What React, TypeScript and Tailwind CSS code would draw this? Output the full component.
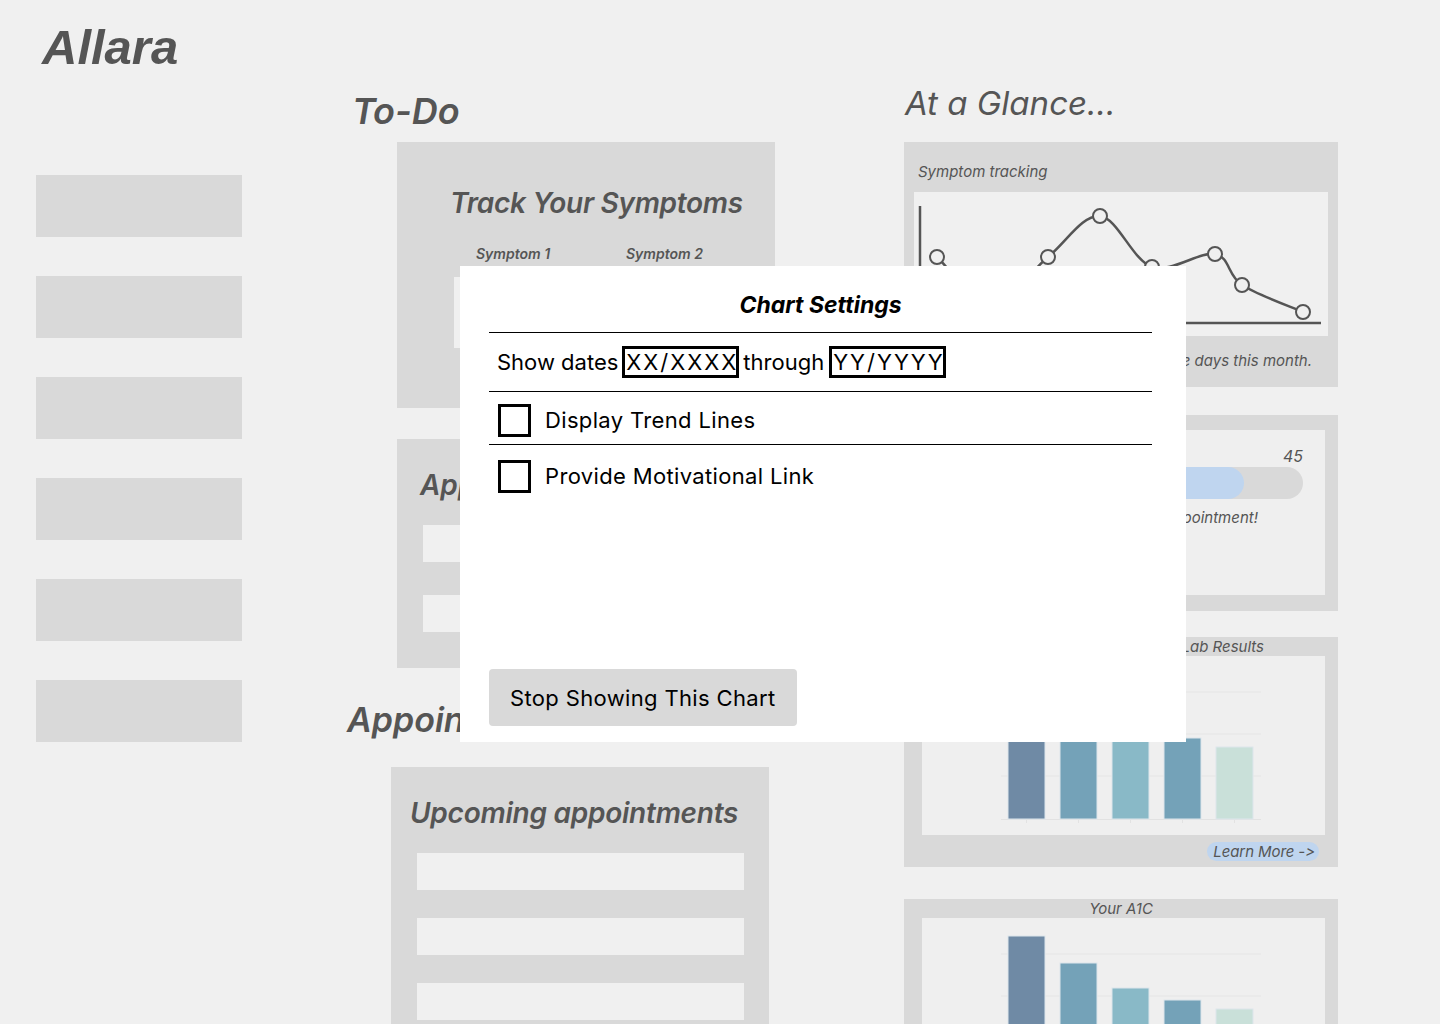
import React from "react";

const pts: [number, number][] = [
  [23, 65],
  [78, 112],
  [134, 65],
  [186, 24],
  [238, 75],
  [301, 62],
  [328, 93],
  [389, 120],
];

function smoothPath(p: [number, number][]) {
  let d = `M${p[0][0]},${p[0][1]}`;
  for (let i = 0; i < p.length - 1; i++) {
    const p0 = p[i - 1] || p[i];
    const p1 = p[i];
    const p2 = p[i + 1];
    const p3 = p[i + 2] || p[i + 1];
    const c1x = p1[0] + (p2[0] - p0[0]) / 6;
    const c1y = p1[1] + (p2[1] - p0[1]) / 6;
    const c2x = p2[0] - (p3[0] - p1[0]) / 6;
    const c2y = p2[1] - (p3[1] - p1[1]) / 6;
    d += ` C${c1x},${c1y} ${c2x},${c2y} ${p2[0]},${p2[1]}`;
  }
  return d;
}

function LineChart() {
  return (
    <svg width="414" height="144" viewBox="0 0 414 144">
      <line x1="6" y1="14" x2="6" y2="131" stroke="#555" strokeWidth="2.5" />
      <line x1="6" y1="131" x2="407" y2="131" stroke="#555" strokeWidth="2.5" />
      <path d={smoothPath(pts)} fill="none" stroke="#555" strokeWidth="2.5" />
      {pts.map(([x, y], i) => (
        <circle key={i} cx={x} cy={y} r="7" fill="#f0f0f0" stroke="#555" strokeWidth="2" />
      ))}
    </svg>
  );
}

const bars = [
  { x: 86, top: 18, c: "#6f8aa5" },
  { x: 138, top: 45, c: "#74a2b8" },
  { x: 190, top: 70, c: "#89b9c7" },
  { x: 242, top: 82, c: "#74a2b8" },
  { x: 294, top: 91, c: "#c9e0d9" },
];

function BarChart() {
  return (
    <svg width="403" height="179" viewBox="0 0 403 179">
      {[36, 78, 120].map((y) => (
        <line key={y} x1="79" y1={y} x2="339" y2={y} stroke="#e5e5e5" strokeWidth="1" />
      ))}
      <line x1="79" y1="163.5" x2="339" y2="163.5" stroke="#e2e2e2" strokeWidth="1" />
      {bars.map((b, i) => (
        <g key={i}>
          <rect x={b.x} y={b.top} width="37" height={163 - b.top} fill={b.c} stroke="#dde6ec" strokeWidth="1" />
          <line x1={b.x + 18.5} y1="164" x2={b.x + 18.5} y2="167" stroke="#e2e2e2" strokeWidth="1" />
        </g>
      ))}
    </svg>
  );
}

function Checkbox() {
  return <div className="w-[33px] h-[33px] border-[3px] border-black shrink-0" />;
}

export default function App() {
  return (
    <div className="relative w-[1440px] h-[1024px] overflow-hidden bg-[#f0f0f0] font-['Inter',sans-serif] text-[#555] [font-feature-settings:'calt'_0]">
      <div className="flex">
        {/* Column 1 */}
        <div className="w-[347px] shrink-0 pl-[36px]">
          <div className="pl-[6px] pt-[23px] text-[49px] leading-none font-bold italic font-['Liberation_Sans',Arial,sans-serif] text-[#555]">
            Allara
          </div>
          <div className="mt-[103px] flex flex-col gap-[39px]">
            {[0, 1, 2, 3, 4, 5].map((i) => (
              <div key={i} className="w-[206px] h-[62px] bg-[#d9d9d9]" />
            ))}
          </div>
        </div>

        {/* Column 2 */}
        <div className="w-[557px] shrink-0">
          <div className="mt-[93px] ml-[5px] text-[36px] leading-none font-semibold italic">To-Do</div>
          <div className="mt-[13px] ml-[50px] w-[378px] h-[266px] bg-[#d9d9d9] pt-[47px]">
            <div className="pl-[53px] text-[28px] leading-none font-semibold italic tracking-[-0.3px]">Track Your Symptoms</div>
            <div className="mt-[30px] pl-[79px] flex text-[14px] leading-none font-semibold italic">
              <div className="w-[150px]">Symptom 1</div>
              <div>Symptom 2</div>
            </div>
            <div className="mt-[16px] ml-[57px] w-[290px] h-[71px] bg-[#f0f0f0]" />
          </div>
          <div className="mt-[31px] ml-[50px] w-[378px] h-[229px] bg-[#d9d9d9] pt-[32px]">
            <div className="pl-[23px] text-[28px] leading-none font-semibold italic">Appointment Notes</div>
            <div className="mt-[26px] pl-[26px] flex flex-col gap-[33px]">
              <div className="w-[327px] h-[37px] bg-[#f0f0f0]" />
              <div className="w-[327px] h-[37px] bg-[#f0f0f0]" />
            </div>
          </div>
          <div className="mt-[35px] text-[34px] leading-none font-semibold italic">Appointments</div>
          <div className="mt-[30px] ml-[44px] w-[378px] h-[300px] bg-[#d9d9d9] pt-[32px]">
            <div className="pl-[19px] text-[28px] leading-none font-semibold italic tracking-[-0.25px]">Upcoming appointments</div>
            <div className="mt-[26px] pl-[26px] flex flex-col gap-[28px]">
              <div className="w-[327px] h-[37px] bg-[#f0f0f0]" />
              <div className="w-[327px] h-[37px] bg-[#f0f0f0]" />
              <div className="w-[327px] h-[37px] bg-[#f0f0f0]" />
            </div>
          </div>
        </div>

        {/* Column 3 */}
        <div className="w-[434px] shrink-0">
          <div className="mt-[87px] ml-[1px] text-[33px] leading-none italic">At a Glance...</div>

          <div className="mt-[22px] w-[434px] h-[245px] bg-[#d9d9d9] pt-[22px]">
            <div className="pl-[14px] text-[15px] leading-none italic">Symptom tracking</div>
            <div className="mt-[13px] ml-[10px] w-[414px] h-[144px] bg-[#f0f0f0]">
              <LineChart />
            </div>
            <div className="mt-[17px] pr-[26px] text-right text-[15px] leading-none italic whitespace-nowrap">
              You had symptoms on some of the days this month.
            </div>
          </div>

          <div className="mt-[28px] w-[434px] h-[196px] bg-[#d9d9d9] pt-[15px]">
            <div className="ml-[18px] w-[403px] h-[165px] bg-[#efefef] pt-[18px]">
              <div className="flex justify-between px-[22px] text-[16px] leading-none italic">
                <span className="pl-[4px]">0</span>
                <span>45</span>
              </div>
              <div className="mt-[3px] mx-[22px] h-[32px] rounded-full bg-[#d9d9d9] overflow-hidden">
                <div className="h-full w-[300px] rounded-full bg-[#bfd5ef]" />
              </div>
              <div className="mt-[11px] pr-[67px] text-right text-[15px] leading-none italic whitespace-nowrap">
                30 days until your next appointment!
              </div>
            </div>
          </div>

          <div className="mt-[26px] w-[434px] h-[230px] bg-[#d9d9d9]">
            <div className="h-[19px] pr-[74px] text-right text-[15px] leading-[19px] italic whitespace-nowrap">Your Recent Lab Results</div>
            <div className="ml-[18px] w-[403px] h-[179px] bg-[#efefef]">
              <BarChart />
            </div>
            <div className="mt-[7px] flex justify-end pr-[19px]">
              <div className="h-[19px] pl-[6px] pr-[4px] rounded-full bg-[#bfd5ef] text-[15px] leading-[19px] italic whitespace-nowrap tracking-[-0.1px]">
                Learn More -&gt;
              </div>
            </div>
          </div>

          <div className="mt-[32px] w-[434px] h-[230px] bg-[#d9d9d9]">
            <div className="h-[19px] text-center text-[15px] leading-[19px] italic">Your A1C</div>
            <div className="ml-[18px] w-[403px] h-[179px] bg-[#efefef]">
              <BarChart />
            </div>
          </div>
        </div>
      </div>

      {/* Modal */}
      <div className="absolute left-[460px] top-[266px] w-[726px] h-[476px] bg-white flex flex-col pl-[29px] pr-[34px] text-black tracking-[0.35px]">
        <div className="h-[66px] pt-[28px] text-center text-[23px] leading-none font-bold italic tracking-normal">Chart Settings</div>
        <div className="border-t border-black" />
        <div className="h-[58px] flex items-center pl-[8px] text-[22px] leading-none whitespace-nowrap tracking-normal">
          <span>Show dates</span>
          <span className="ml-[4px] h-[32px] w-[117px] border-[3px] border-black flex items-center pl-[1px] tracking-[2px]">XX/XXXX</span>
          <span className="ml-[4px]">through</span>
          <span className="ml-[5px] h-[32px] w-[117px] border-[3px] border-black flex items-center pl-[1px] tracking-[2px]">YY/YYYY</span>
        </div>
        <div className="border-t border-black" />
        <div className="h-[52px] flex items-start pt-[12px] pl-[9px]">
          <Checkbox />
          <span className="ml-[14px] mt-[5px] text-[22px] leading-none">Display Trend Lines</span>
        </div>
        <div className="border-t border-black" />
        <div className="flex items-start pt-[15px] pl-[9px]">
          <Checkbox />
          <span className="ml-[14px] mt-[5px] text-[22px] leading-none">Provide Motivational Link</span>
        </div>
        <div className="mt-auto mb-[16px] w-fit h-[57px] px-[21px] rounded-[4px] bg-[#d9d9d9] flex items-center text-[22px] leading-none">
          Stop Showing This Chart
        </div>
      </div>
    </div>
  );
}
